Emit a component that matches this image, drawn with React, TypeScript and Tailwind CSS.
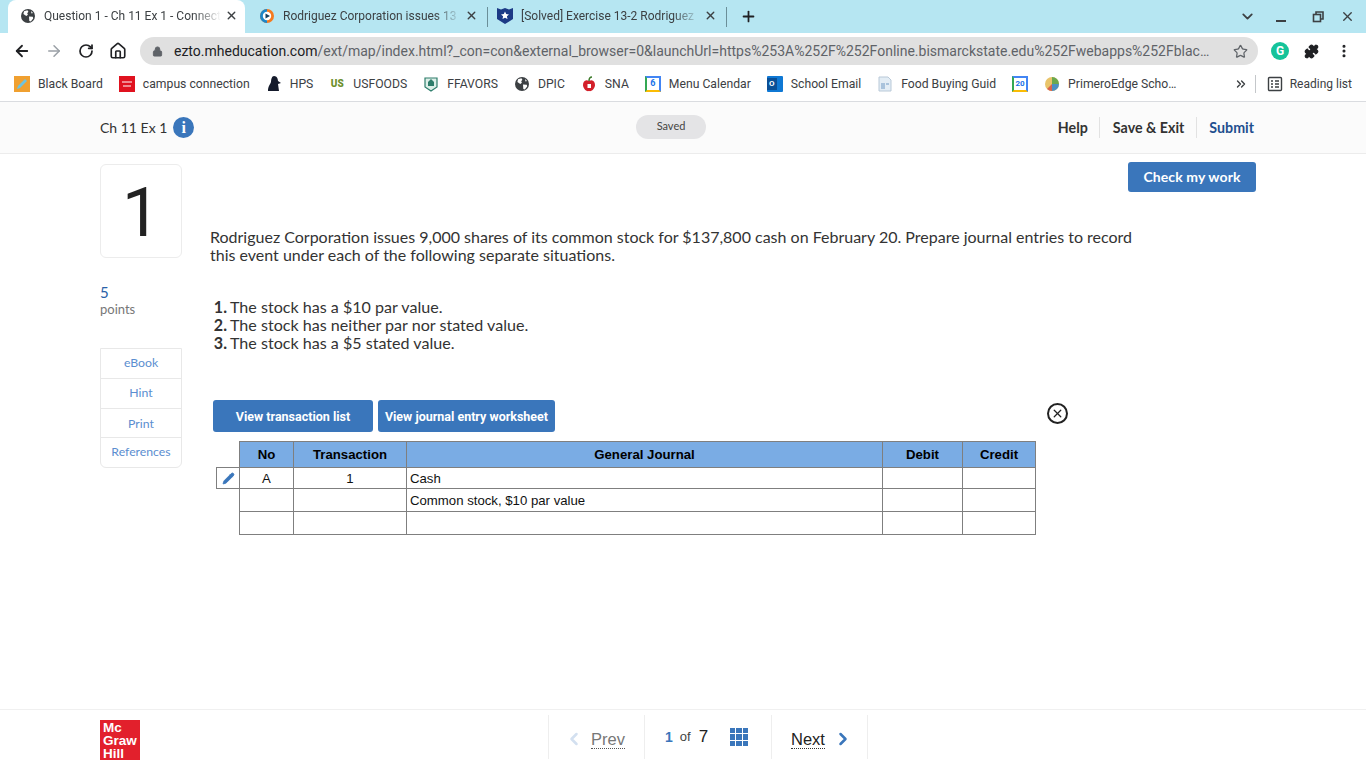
import { ArrowLeft, ArrowRight, ChevronDown, ChevronLeft, ChevronRight, ChevronsRight, Home, Lock, MoreVertical, Pencil, Plus, Puzzle, RotateCw, Star, X } from 'lucide-react'
import type { ReactNode } from 'react'

function EarthIcon({ className }: { className: string }) {
    return (
        <svg viewBox="0 0 16 16" className={className}>
            <circle cx="8" cy="8" r="7" fill="#3c4043" />
            <path d="M4 3.2l3.4-.9 1 1.4-1.2 1.5.7 1.6-1.6 1.2L3.4 6zM9 8.5l3.8.3.4 1.8-2.4 3-1.5-.6zM11 3l2 2-1.5.6z" fill="#fff" />
        </svg>
    )
}

function Tab({ icon, title, className }: { icon: ReactNode; title: string; className: string }) {
    return (
        <div className={`relative flex h-[33px] shrink-0 items-center pb-0.5 ${className}`}>
            <span className="flex w-4 shrink-0 items-center justify-center">{icon}</span>
            <span className="ml-2 min-w-0 flex-1 overflow-hidden whitespace-nowrap text-xs text-[#3c4043] [mask-image:linear-gradient(to_right,black_85%,transparent)]">{title}</span>
            <X size={13} strokeWidth={2.5} className="ml-1 shrink-0 text-[#3c4043]" />
        </div>
    )
}

function Bookmark({ icon, label }: { icon: ReactNode; label: string }) {
    return (
        <div className="flex shrink-0 items-center gap-2">
            <span className="flex h-4 w-4 items-center justify-center">{icon}</span>
            <span className="whitespace-nowrap">{label}</span>
        </div>
    )
}

function BrowserChrome() {
    return (
        <div className="font-['Roboto',sans-serif]">
            <div className="flex h-[33px] items-end bg-[#b6e6f2] pl-2">
                <Tab className="w-[237px] rounded-t-lg bg-white pl-[12px] pr-[7px]" title="Question 1 - Ch 11 Ex 1 - Connect" icon={<EarthIcon className="h-4 w-4" />} />
                <Tab
                    className="w-[242px] pl-[14px] pr-[9px]"
                    title="Rodriguez Corporation issues 13"
                    icon={
                        <svg viewBox="0 0 16 16" className="h-4 w-4">
                            <circle cx="8" cy="8" r="7" fill="#f47a20" />
                            <path d="M8 1a7 7 0 0 0 0 14z" fill="#1c87c9" />
                            <circle cx="8" cy="8" r="4.2" fill="#fff" />
                            <path d="M6.5 5.6L11 8l-4.5 2.4z" fill="#163f5c" />
                        </svg>
                    }
                />
                <div className="mb-1.5 h-5 w-px bg-[#6b8f99]" />
                <Tab
                    className="w-[238px] pl-[9px] pr-[9px]"
                    title="[Solved] Exercise 13-2 Rodriguez"
                    icon={
                        <svg viewBox="0 0 16 16" className="h-4 w-4">
                            <path d="M0 0l4 1.5L8 0l4 1.5L16 0v11l-8 5-8-5z" fill="#1c3a86" />
                            <path d="M8 3.5l1.2 2.6 2.8.3-2.1 1.9.6 2.8L8 9.7l-2.5 1.4.6-2.8L4 6.4l2.8-.3z" fill="#fff" />
                        </svg>
                    }
                />
                <div className="mb-1.5 h-5 w-px bg-[#6b8f99]" />
                <Plus size={17} strokeWidth={2.5} className="mb-2 ml-[13px] text-[#202124]" />
                <div className="mb-2 ml-auto flex items-center text-[#3c4043]">
                    <ChevronDown size={17} strokeWidth={2.5} />
                    <span className="ml-[20px] mt-2 h-0.5 w-2.5 bg-[#3c4043]" />
                    <svg viewBox="0 0 12 12" className="ml-[26px] h-3 w-3" fill="none" stroke="#3c4043" strokeWidth="1.6">
                        <rect x="1.5" y="3.5" width="7" height="7" />
                        <path d="M4 3V1h7v7H9" />
                    </svg>
                    <X size={15} strokeWidth={2.2} className="ml-[16px] mr-[11px]" />
                </div>
            </div>

            <div className="flex h-9 items-center bg-white text-[#3c4043]">
                <ArrowLeft size={18} strokeWidth={2.4} className="ml-[13px] text-[#202124]" />
                <ArrowRight size={18} strokeWidth={2} className="ml-[14px] text-[#9aa0a6]" />
                <RotateCw size={16} strokeWidth={2.6} className="ml-[15px] text-[#202124]" />
                <Home size={18} strokeWidth={2.2} className="ml-[15px] text-[#202124]" />
                <div className="ml-[13px] flex h-7 w-[1118px] items-center rounded-full bg-[#e0e0e0] pl-[12px] pr-[10px]">
                    <Lock size={11} fill="#5f6368" className="text-[#5f6368]" />
                    <span className="ml-[11px] min-w-0 flex-1 whitespace-nowrap text-[14px] text-[#5f6368]">
                        <span className="text-[#202124]">ezto.mheducation.com</span>/ext/map/index.html?_con=con&external_browser=0&launchUrl=https%253A%252F%252Fonline.bismarckstate.edu%252Fwebapps%252Fblac…
                    </span>
                    <Star size={15} strokeWidth={2} className="text-[#5f6368]" />
                </div>
                <span className="ml-[13px] flex h-[18px] w-[18px] items-center justify-center rounded-full bg-[#15c39a] text-xs font-bold text-white">G</span>
                <Puzzle size={15} fill="#202124" className="ml-[15px] text-[#202124]" />
                <MoreVertical size={16} strokeWidth={2.6} className="ml-[17px] text-[#202124]" />
            </div>

            <div className="flex h-[33px] items-center gap-4 border-b border-[#dadce0] bg-white pb-0.5 pl-[14px] text-[12.2px] text-[#3c4043]">
                <Bookmark label="Black Board" icon={
                    <svg viewBox="0 0 16 16" className="h-4 w-4">
                        <rect width="16" height="16" fill="#f0a030" />
                        <path d="M3 13l1-3 7-7 2 2-7 7z" fill="#6fc3df" />
                    </svg>
                } />
                <Bookmark label="campus connection" icon={
                    <svg viewBox="0 0 16 16" className="h-4 w-4">
                        <rect width="16" height="16" fill="#e0121f" />
                        <path d="M3 6h10M4 10h8" stroke="#fff" strokeWidth="1" />
                    </svg>
                } />
                <Bookmark label="HPS" icon={
                    <svg viewBox="0 0 16 16" className="h-4 w-4">
                        <path d="M8 0c3 0 4 3 4 5l3 2-3 1 1 7H2c0-5 2-6 3-9 0-3 1-6 3-6z" fill="#141a2b" />
                    </svg>
                } />
                <Bookmark label="USFOODS" icon={<span className="text-[10px] font-black leading-none text-[#6d8f2c]">US</span>} />
                <Bookmark label="FFAVORS" icon={
                    <svg viewBox="0 0 16 16" className="h-4 w-4">
                        <path d="M2 2h12v9l-6 4-6-4z" fill="#dcefe8" stroke="#2e7d6b" strokeWidth="1.2" />
                        <path d="M5 10V6l3-3 3 3v4z" fill="#2e7d6b" />
                    </svg>
                } />
                <Bookmark label="DPIC" icon={<EarthIcon className="h-4 w-4" />} />
                <Bookmark label="SNA" icon={
                    <svg viewBox="0 0 16 16" className="h-4 w-4">
                        <path d="M8 5c4-2 6 1 6 4s-3 7-6 6c-3 1-6-3-6-6s2-6 6-4z" fill="#d3202a" />
                        <path d="M8 5c0-2 1-4 3-4" stroke="#3c7a2a" strokeWidth="1.5" fill="none" />
                        <rect x="6.5" y="8" width="3.5" height="4" fill="#fff" />
                    </svg>
                } />
                <Bookmark label="Menu Calendar" icon={
                    <span className="flex h-4 w-4 items-center justify-center border-2 border-[#4285f4] border-b-[#fbbc04] border-l-[#34a853] bg-white text-[9px] font-bold leading-none text-[#1a73e8]">6</span>
                } />
                <Bookmark label="School Email" icon={
                    <span className="flex h-4 w-4 items-center rounded-[1px] bg-[#0f78d4]">
                        <span className="flex h-3 w-[10px] items-center justify-center bg-[#0a4f96] text-[8px] font-bold leading-none text-white">O</span>
                    </span>
                } />
                <Bookmark label="Food Buying Guid" icon={
                    <svg viewBox="0 0 16 16" className="h-4 w-4">
                        <path d="M2 1h9l3 3v11H2z" fill="#e3edf5" stroke="#b9c9d8" />
                        <path d="M4 7h4v6H4zM9 7h3v2H9z" fill="#a9c3dc" />
                    </svg>
                } />
                <span className="flex h-4 w-4 shrink-0 items-center justify-center border-2 border-[#4285f4] border-b-[#fbbc04] border-l-[#34a853] bg-white text-[8px] font-bold leading-none text-[#1a73e8]">20</span>
                <Bookmark label="PrimeroEdge Scho…" icon={
                    <svg viewBox="0 0 16 16" className="h-4 w-4">
                        <circle cx="8" cy="8" r="7" fill="#e9c46a" />
                        <path d="M8 1a7 7 0 0 1 7 7H8z" fill="#6aa84f" />
                        <path d="M8 8h7a7 7 0 0 1-7 7z" fill="#4a90c2" />
                        <path d="M8 8v7a7 7 0 0 1-5-2z" fill="#d9634c" />
                    </svg>
                } />
                <div className="ml-auto flex items-center">
                    <ChevronsRight size={14} strokeWidth={2.4} className="text-[#3c4043]" />
                    <span className="ml-[7px] h-[18px] w-px bg-[#c4c7ca]" />
                    <svg viewBox="0 0 16 16" className="ml-[11px] h-4 w-4" fill="none" stroke="#3c4043" strokeWidth="1.4">
                        <rect x="1.5" y="1.5" width="13" height="13" rx="1" />
                        <path d="M4 5h2M8 5h4M4 8h2M8 8h4M4 11h2M8 11h4" />
                    </svg>
                    <span className="ml-[7px] mr-[14px] whitespace-nowrap text-xs">Reading list</span>
                </div>
            </div>
        </div>
    )
}

function SideLink({ label, className }: { label: string; className: string }) {
    return (
        <div className={`flex items-center justify-center text-[12.25px] text-[#5b8ed0] ${className}`}>
            {label}
        </div>
    )
}

const cellClass = 'border border-[#7f7f7f] px-[3px] pb-0 pt-px text-[13.2px] leading-4'
const headClass = 'border border-[#7f7f7f] bg-[#7aace4] pt-px text-center text-[13.2px] font-bold leading-4 text-black'

function JournalTable() {
    return (
        <table className="ml-[6px] mt-[9px] w-[819px] table-fixed border-collapse font-['Liberation_Sans',Arial,sans-serif] text-[#111]">
            <colgroup>
                <col className="w-[23px]" />
                <col className="w-[54px]" />
                <col className="w-[113px]" />
                <col className="w-[476px]" />
                <col className="w-[80px]" />
                <col className="w-[73px]" />
            </colgroup>
            <thead>
                <tr className="h-[26px]">
                    <th />
                    <th className={headClass}>No</th>
                    <th className={headClass}>Transaction</th>
                    <th className={headClass}>General Journal</th>
                    <th className={headClass}>Debit</th>
                    <th className={headClass}>Credit</th>
                </tr>
            </thead>
            <tbody>
                <tr className="h-[21px]">
                    <td className="border border-[#7f7f7f] text-center">
                        <Pencil size={13} fill="#3a76bb" strokeWidth={1.5} className="mx-auto text-[#3a76bb]" />
                    </td>
                    <td className={`${cellClass} text-center`}>A</td>
                    <td className={`${cellClass} text-center`}>1</td>
                    <td className={cellClass}>Cash</td>
                    <td className={cellClass} />
                    <td className={cellClass} />
                </tr>
                <tr className="h-[23px]">
                    <td />
                    <td className={cellClass} />
                    <td className={cellClass} />
                    <td className={cellClass}>Common stock, $10 par value</td>
                    <td className={cellClass} />
                    <td className={cellClass} />
                </tr>
                <tr className="h-[23px]">
                    <td />
                    <td className={cellClass} />
                    <td className={cellClass} />
                    <td className={cellClass} />
                    <td className={cellClass} />
                    <td className={cellClass} />
                </tr>
            </tbody>
        </table>
    )
}

export default function App() {
    return (
        <div className="flex h-screen flex-col overflow-hidden bg-white font-['Lato',sans-serif] text-[#333]">
            <BrowserChrome />

            <header className="flex h-[52px] shrink-0 items-center border-b border-[#ececec] bg-[#fbfbfb] px-[100px]">
                <div className="flex w-[536px] items-center gap-[6px]">
                    <span className="text-[14px] text-[#333]">Ch 11 Ex 1</span>
                    <span className="flex h-[21px] w-[21px] items-center justify-center rounded-full bg-[#3a76bb] font-['Liberation_Serif',serif] text-[16px] font-bold leading-none text-white">i</span>
                </div>
                <span className="mb-0.5 flex h-6 w-[70px] items-center justify-center rounded-full bg-[#e4e4e6] text-[11px] text-[#444]">Saved</span>
                <nav className="ml-auto flex items-center text-[14.25px] font-bold">
                    <span className="pr-[11px] text-[#333]">Help</span>
                    <span className="border-l border-[#e2e2e2] pl-[13px] pr-[12px] text-[#333]">Save &amp; Exit</span>
                    <span className="border-l border-[#e2e2e2] pl-[12px] pr-[12px] text-[#1f4f8f]">Submit</span>
                </nav>
            </header>

            <main className="flex min-h-0 flex-1 pl-[100px] pr-[110px]">
                <aside className="mt-[10px] w-[82px] shrink-0">
                    <div className="flex h-[94px] items-center justify-center rounded-md border border-[#ececec] pt-1 font-['Roboto',sans-serif] text-[68px] font-[450] leading-none text-[#222]">1</div>
                    <p className="mt-[25px] text-[15px] leading-[18px] text-[#2a62a8]">5</p>
                    <p className="text-[13px] leading-4 text-[#777]">points</p>
                    <div className="mt-[31px] flex flex-col divide-y divide-[#e8e8e8] rounded-b-md border border-[#e8e8e8]">
                        <SideLink label="eBook" className="h-[30px]" />
                        <SideLink label="Hint" className="h-[30px]" />
                        <SideLink label="Print" className="h-[29px] pt-0.5" />
                        <SideLink label="References" className="h-[29px]" />
                    </div>
                </aside>

                <section className="ml-[28px] flex min-w-0 flex-1 flex-col">
                    <div className="mt-[8px] flex h-[30px] justify-end">
                        <button className="h-[30px] w-[128px] rounded-[3px] bg-[#3a76bb] pb-0.5 text-[14px] font-bold tracking-[0.1px] text-white">Check my work</button>
                    </div>
                    <p className="mt-[36px] w-[930px] text-[16px] leading-[18px] text-[#333]">
                        Rodriguez Corporation issues 9,000 shares of its common stock for $137,800 cash on February 20. Prepare journal entries to record this event under each of the following separate situations.
                    </p>
                    <ol className="mt-[34px] text-[16.1px] leading-[18px] text-[#333]">
                        <li className="flex"><b className="w-5 pr-[3px] text-right">1.</b>The stock has a $10 par value.</li>
                        <li className="flex"><b className="w-5 pr-[3px] text-right">2.</b>The stock has neither par nor stated value.</li>
                        <li className="flex"><b className="w-5 pr-[3px] text-right">3.</b>The stock has a $5 stated value.</li>
                    </ol>

                    <div className="ml-[3px] mt-[48px] flex w-[855px] items-start gap-[5px] font-['Roboto',sans-serif]">
                        <button className="h-8 w-[160px] rounded-[3px] bg-[#3a76bb] pt-[3px] text-[12.5px] font-bold text-white">View transaction list</button>
                        <button className="h-8 w-[177px] rounded-[3px] bg-[#3a76bb] pt-[3px] text-[12.5px] font-bold text-white">View journal entry worksheet</button>
                        <span className="ml-auto mt-[3px] flex h-[21px] w-[21px] items-center justify-center rounded-full border-2 border-[#222]">
                            <X size={13} strokeWidth={2.4} className="text-[#222]" />
                        </span>
                    </div>

                    <JournalTable />
                </section>
            </main>

            <footer className="flex h-[59px] shrink-0 items-start border-t border-[#f0f0f0] pl-[100px]">
                <div className="mt-[10px] flex h-10 w-10 flex-col justify-center bg-[#e2202c] pl-[3px] font-['Liberation_Sans',sans-serif] text-[13.5px] font-bold leading-[13px] text-white">
                    <span>Mc</span>
                    <span>Graw</span>
                    <span>Hill</span>
                </div>
                <div className="ml-[408px] mt-[5px] flex h-[44px] items-stretch border-x border-[#eeeeee] pt-1 font-['Liberation_Sans',sans-serif]">
                    <div className="flex w-[95px] items-center pl-[15px]">
                        <ChevronLeft size={20} strokeWidth={3} className="text-[#d3e0f0]" />
                        <span className="ml-[7px] border-b border-dotted border-[#555] text-[16.5px] leading-[18px] text-[#777]">Prev</span>
                    </div>
                    <div className="-mt-1 flex w-[128px] items-center border-x border-[#eeeeee] pl-[20px]">
                        <span className="text-[14px] font-bold text-[#3a76bb]">1</span>
                        <span className="ml-[7px] text-[13px] text-[#444]">of</span>
                        <span className="ml-[8px] text-[17px] text-[#222]">7</span>
                        <span className="ml-[22px] grid h-[18px] w-[18px] grid-cols-3 gap-px">
                            {Array.from({ length: 9 }).map((_, index) => (
                                <span key={index} className="bg-[#3a76bb]" />
                            ))}
                        </span>
                    </div>
                    <div className="flex w-[95px] items-center pl-[19px]">
                        <span className="border-b border-dotted border-[#333] text-[16.5px] leading-[18px] text-[#222]">Next</span>
                        <ChevronRight size={20} strokeWidth={3} className="ml-[8px] text-[#3a76bb]" />
                    </div>
                </div>
            </footer>
        </div>
    )
}
